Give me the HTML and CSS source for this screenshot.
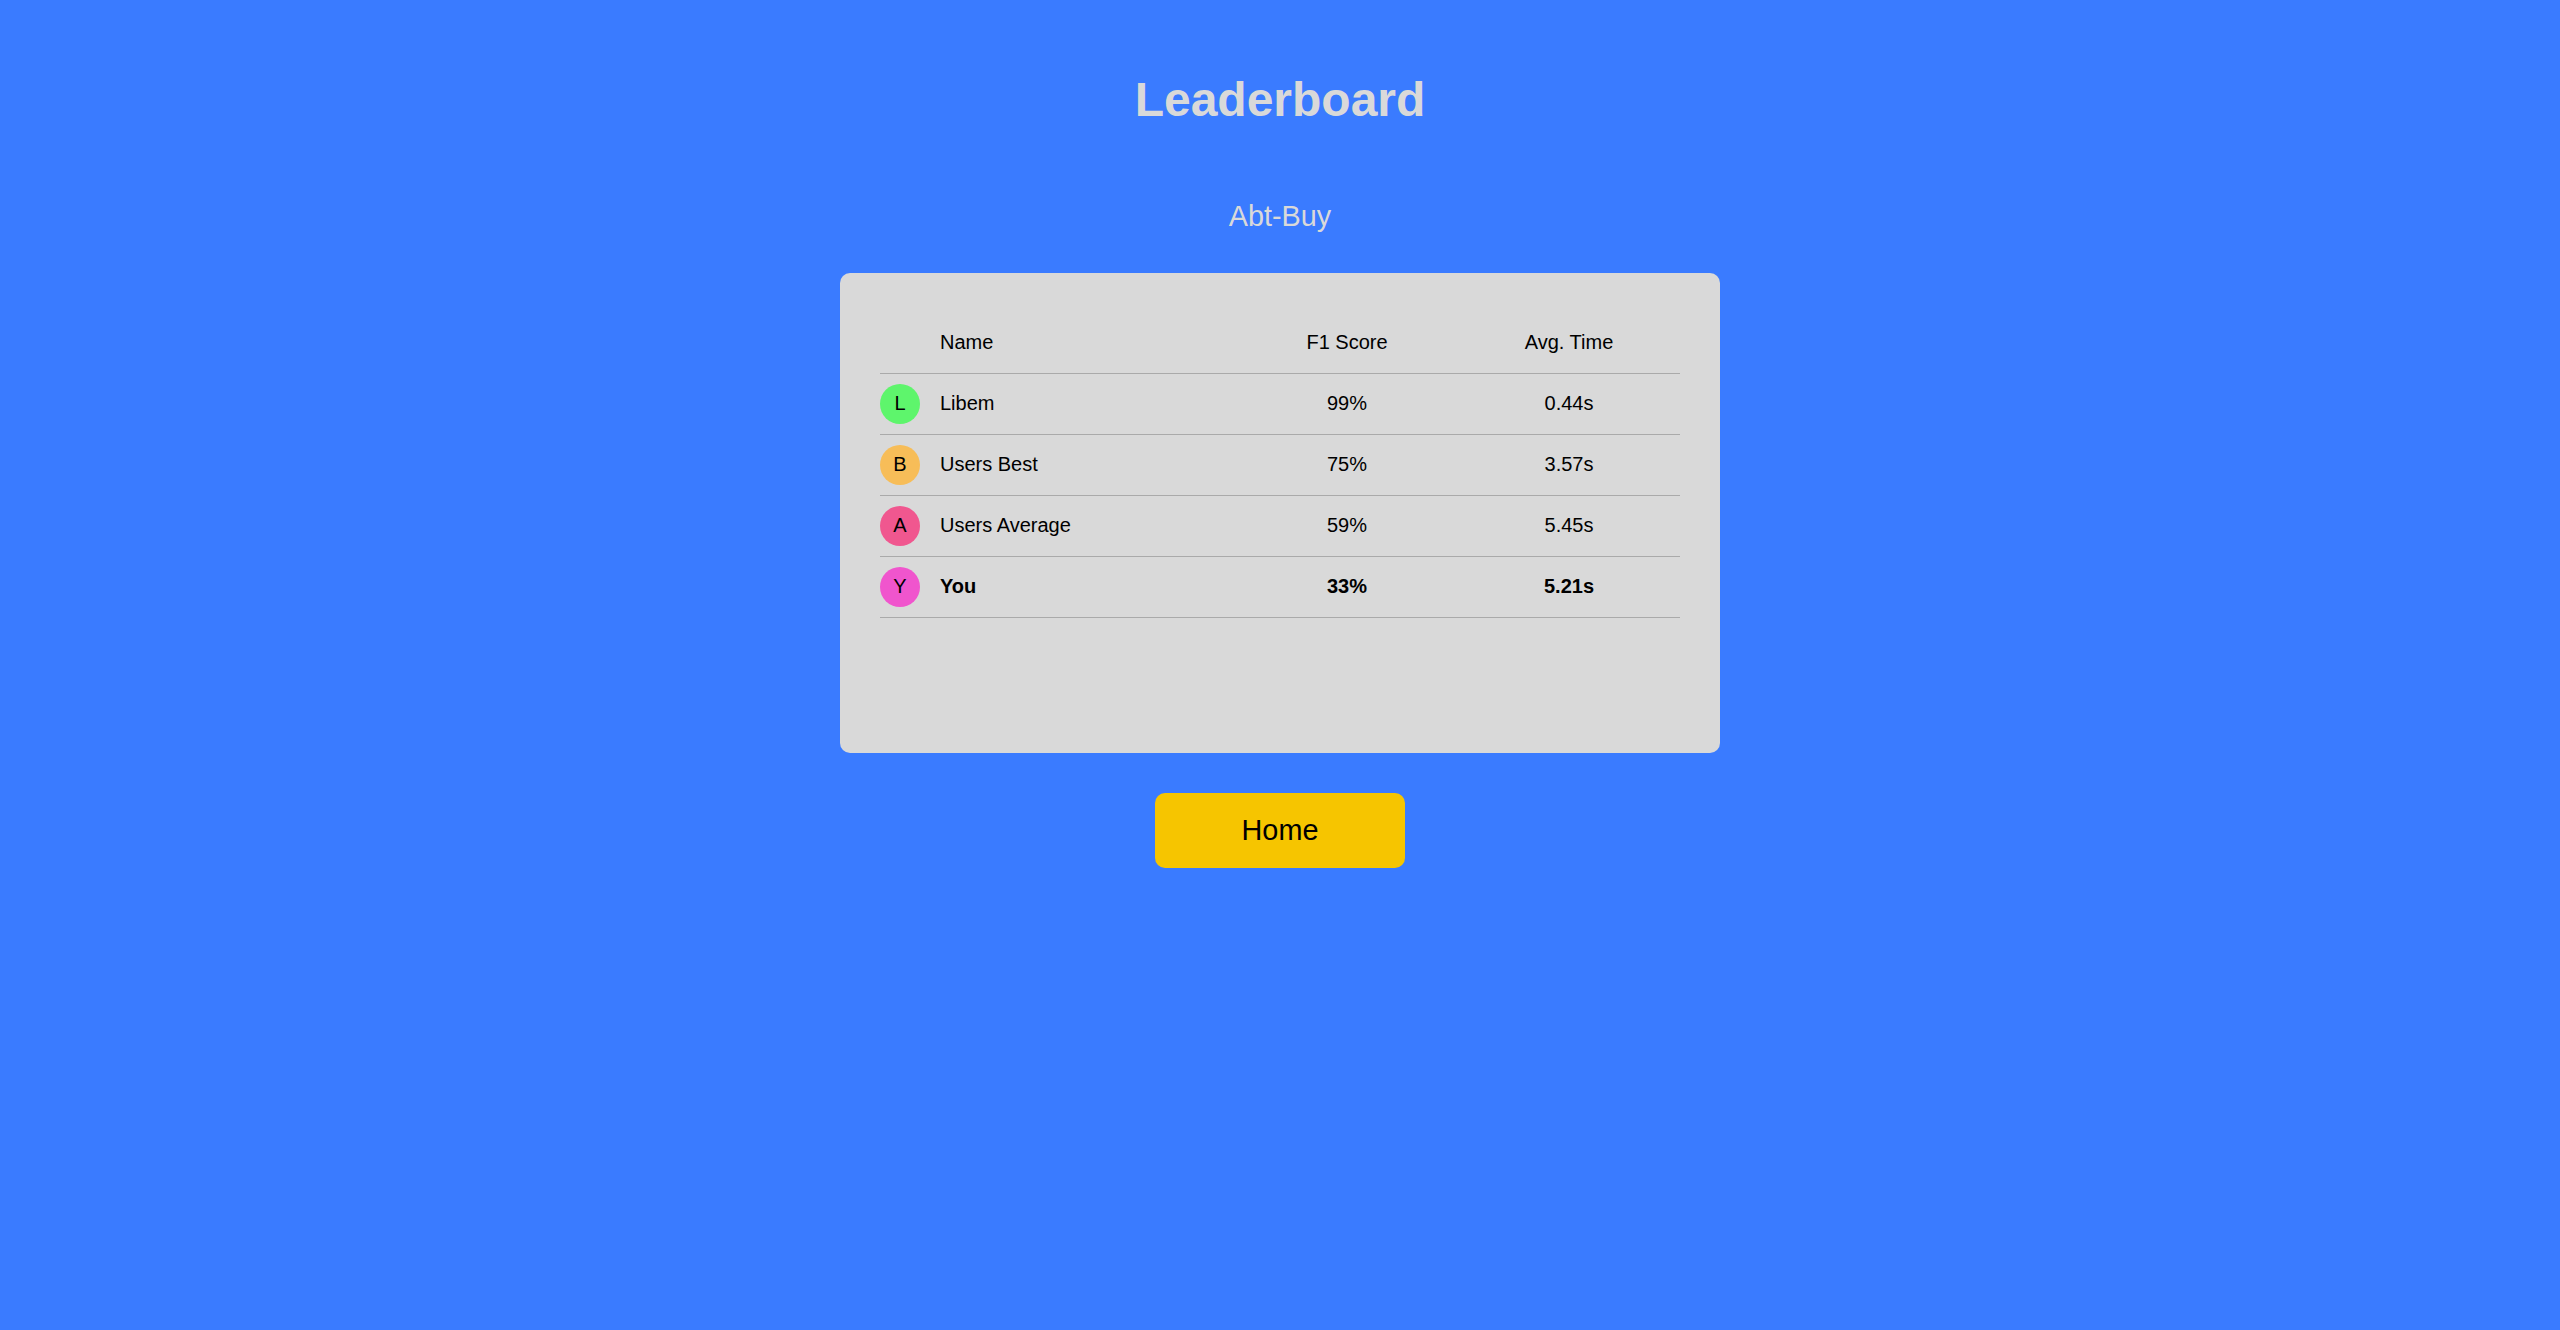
FILE: index.html
```html
<!DOCTYPE html>
<html lang="en">
<head>
<meta charset="utf-8">
<title>Leaderboard</title>
<link rel="stylesheet" href="styles.css">
</head>
<body>
<main class="page">
  <h1 class="title">Leaderboard</h1>
  <h2 class="subtitle">Abt-Buy</h2>
  <section class="card">
    <div class="board">
      <div class="row head">
        <span class="cell-avatar"></span>
        <span class="cell-name">Name</span>
        <span class="cell-num">F1 Score</span>
        <span class="cell-num">Avg. Time</span>
      </div>
      <div class="row">
        <span class="cell-avatar"><span class="avatar green">L</span></span>
        <span class="cell-name">Libem</span>
        <span class="cell-num">99%</span>
        <span class="cell-num">0.44s</span>
      </div>
      <div class="row">
        <span class="cell-avatar"><span class="avatar orange">B</span></span>
        <span class="cell-name">Users Best</span>
        <span class="cell-num">75%</span>
        <span class="cell-num">3.57s</span>
      </div>
      <div class="row">
        <span class="cell-avatar"><span class="avatar red">A</span></span>
        <span class="cell-name">Users Average</span>
        <span class="cell-num">59%</span>
        <span class="cell-num">5.45s</span>
      </div>
      <div class="row you">
        <span class="cell-avatar"><span class="avatar magenta">Y</span></span>
        <span class="cell-name">You</span>
        <span class="cell-num">33%</span>
        <span class="cell-num">5.21s</span>
      </div>
    </div>
  </section>
  <button class="home" type="button">Home</button>
</main>
</body>
</html>
```

FILE: styles.css
```css
html, body {
  margin: 0;
  padding: 0;
}
body {
  background: #3a7bff;
  font-family: "Liberation Sans", Arial, sans-serif;
  min-height: 1330px;
}
.page {
  display: flex;
  flex-direction: column;
  align-items: center;
}
.title {
  margin: 76px 0 0;
  font-size: 48px;
  line-height: 48px;
  font-weight: bold;
  color: #d9d9d9;
}
.subtitle {
  margin: 78px 0 0;
  font-size: 28.8px;
  line-height: 28.8px;
  font-weight: normal;
  color: #d9d9d9;
}
.card {
  box-sizing: border-box;
  margin-top: 42px;
  width: 880px;
  height: 480px;
  padding: 40px;
  background: #d9d9d9;
  border-radius: 10px;
}
.board {
  display: flex;
  flex-direction: column;
}
.row {
  display: grid;
  grid-template-columns: 60px 296px 222px 222px;
  align-items: center;
  height: 60px;
  border-bottom: 1px solid #aaaaaa;
  font-size: 20px;
  color: #000;
}
.row.you {
  font-weight: bold;
}
.cell-num {
  text-align: center;
}
.avatar {
  display: flex;
  align-items: center;
  justify-content: center;
  width: 40px;
  height: 40px;
  border-radius: 50%;
  font-weight: normal;
  font-size: 20px;
}
.green { background: #5ef56c; }
.orange { background: #f7bd58; }
.red { background: #f0578f; }
.magenta { background: #f055cd; }
.home {
  margin-top: 40px;
  width: 250px;
  height: 75px;
  border: none;
  border-radius: 10px;
  background: #f6c500;
  color: #000;
  font-family: "Liberation Sans", Arial, sans-serif;
  font-size: 28.8px;
  cursor: pointer;
}
```
